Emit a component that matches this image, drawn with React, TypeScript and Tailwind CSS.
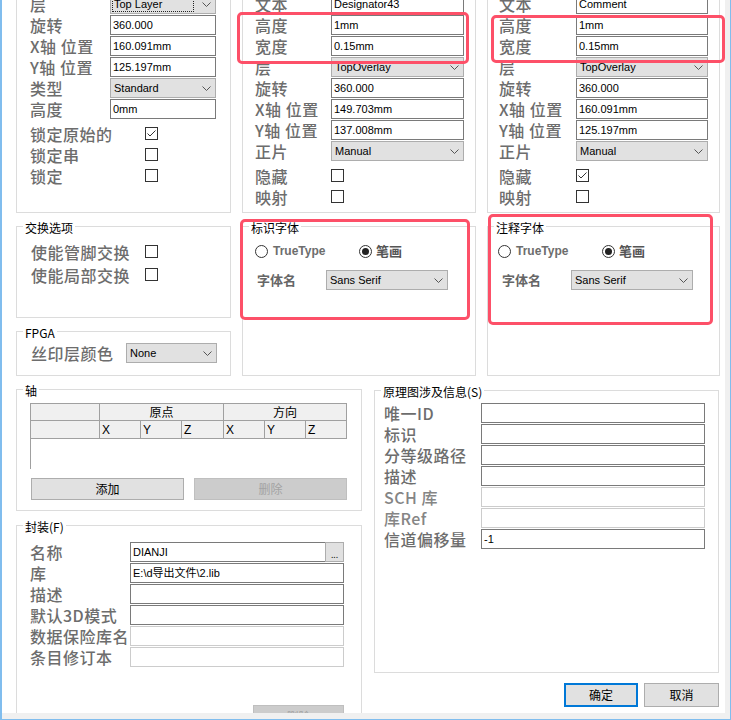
import React from 'react';

const CJK = "font-['Noto_Sans_CJK_SC',sans-serif]";
const LBL =
  "font-['Noto_Sans_CJK_SC',sans-serif] text-[16px] leading-[18px] font-medium text-[#6d6d6d] whitespace-nowrap tracking-[0.5px]";
const TXT = "font-['Liberation_Sans','Noto_Sans_CJK_SC',sans-serif] text-[11px] leading-[14px] text-black whitespace-nowrap";

function Chevron() {
  return (
    <svg width="9" height="5" viewBox="0 0 9 5" className="shrink-0">
      <polyline points="0.5,0.5 4.5,4.5 8.5,0.5" fill="none" stroke="#555" strokeWidth="1" />
    </svg>
  );
}

function TextBox({ value = '', disabled = false, className = '' }: { value?: string; disabled?: boolean; className?: string }) {
  return (
    <div
      className={`h-[20px] flex items-center bg-white border pl-[2px] ${
        disabled ? 'border-[#cccccc]' : 'border-[#7a7a7a]'
      } ${TXT} ${className}`}
    >
      {value}
    </div>
  );
}

function Select({ value, focus = false, className = '' }: { value: string; focus?: boolean; className?: string }) {
  return (
    <div className={`h-[20px] flex items-center justify-between bg-[#e1e1e1] border border-[#adadad] pr-[4px] ${TXT} ${className}`}>
      {focus ? (
        <div className="self-stretch my-[1px] ml-[1px] mr-[8px] flex-1 flex items-center border border-dotted border-[#222] pl-[1px]">
          {value}
        </div>
      ) : (
        <span className="pl-[3px]">{value}</span>
      )}
      <Chevron />
    </div>
  );
}

function Check({ checked = false }: { checked?: boolean }) {
  return (
    <div className="w-[13px] h-[13px] border border-[#333] bg-white shrink-0">
      {checked && (
        <svg width="11" height="11" viewBox="0 0 11 11">
          <polyline points="1.5,5.5 4,8 9.5,2.5" fill="none" stroke="#333" strokeWidth="1" />
        </svg>
      )}
    </div>
  );
}

function Radio({ on = false }: { on?: boolean }) {
  return (
    <div className="w-[13px] h-[13px] rounded-full border border-[#333] bg-white flex items-center justify-center shrink-0">
      {on && <div className="w-[7px] h-[7px] rounded-full bg-[#222]" />}
    </div>
  );
}

function Field({ label, lw, dim = false, children }: { label: string; lw: string; dim?: boolean; children: React.ReactNode }) {
  return (
    <div className="flex items-center h-[20px]">
      <div className={`${lw} shrink-0 ${LBL} ${dim ? 'text-[#858585]' : ''}`}>{label}</div>
      <div className="flex-1 min-w-0">{children}</div>
    </div>
  );
}

function CheckRow({ label, lw, checked = false, h = 'h-[21px]' }: { label: string; lw: string; checked?: boolean; h?: string }) {
  return (
    <div className={`flex items-center ${h}`}>
      <div className={`${lw} shrink-0 ${LBL}`}>{label}</div>
      <Check checked={checked} />
    </div>
  );
}

function Group({ title, className = '', children }: { title?: string; className?: string; children?: React.ReactNode }) {
  return (
    <div className={`relative border border-[#dcdcdc] ${className}`}>
      {title && (
        <span className={`absolute top-[-6px] left-[6px] bg-white px-[2px] text-[12px] leading-[14px] text-black ${CJK}`}>
          {title}
        </span>
      )}
      {children}
    </div>
  );
}

function Btn({
  children,
  className = '',
  disabled = false,
  primary = false,
}: {
  children: React.ReactNode;
  className?: string;
  disabled?: boolean;
  primary?: boolean;
}) {
  const look = disabled
    ? 'bg-[#cccccc] border border-[#bfbfbf] text-[#a3a3a3]'
    : primary
    ? 'bg-[#e1e1e1] border-2 border-[#0078d7] text-black'
    : 'bg-[#e1e1e1] border border-[#adadad] text-black';
  return (
    <div className={`flex items-center justify-center text-[12px] ${CJK} ${look} ${className}`}>{children}</div>
  );
}

function FontGroup({ title, pl, lm }: { title: string; pl: string; lm: string }) {
  return (
    <Group title={title} className={`h-[150px] pt-[13px] ${pl}`}>
      <div className="flex items-center h-[22px]">
        <div className="w-[104px] flex items-center gap-[5px]">
          <Radio />
          <span className="font-['Liberation_Sans',sans-serif] text-[12px] font-bold text-[#6d6d6d]">TrueType</span>
        </div>
        <div className="flex items-center gap-[4px]">
          <Radio on />
          <span className={`${CJK} text-[13px] font-bold text-[#555]`}>笔画</span>
        </div>
      </div>
      <div className={`flex items-center h-[20px] mt-[8px] ${lm}`}>
        <div className={`w-[69px] ${CJK} text-[13px] font-bold text-[#666]`}>字体名</div>
        <Select value="Sans Serif" className="w-[122px]" />
      </div>
    </Group>
  );
}

function Box({ className }: { className: string }) {
  return <div className={`absolute border-[3px] border-[#fd5068] rounded-[5px] pointer-events-none ${className}`} />;
}

export default function App() {
  return (
    <div className="w-[731px] h-[720px] bg-[#f0f0f0] border-l-2 border-r border-b border-[#80bdee] overflow-hidden">
      <div className="relative w-[723px] h-[713px] bg-white overflow-hidden">
        <div className="pl-[14px] mt-[-20px] flex flex-col gap-[13px]">
          {/* upper three columns */}
          <div className="flex gap-[11px]">
            {/* left */}
            <div className="w-[215px] flex flex-col gap-[13px]">
              <Group className="h-[233px] pt-[13px] pl-[13px] pr-[14px]">
                <div className="flex flex-col gap-[1px]">
                  <Field lw="w-[80px]" label="层">
                    <Select value="Top Layer" focus />
                  </Field>
                  <Field lw="w-[80px]" label="旋转">
                    <TextBox value="360.000" />
                  </Field>
                  <Field lw="w-[80px]" label="X轴 位置">
                    <TextBox value="160.091mm" />
                  </Field>
                  <Field lw="w-[80px]" label="Y轴 位置">
                    <TextBox value="125.197mm" />
                  </Field>
                  <Field lw="w-[80px]" label="类型">
                    <Select value="Standard" />
                  </Field>
                  <Field lw="w-[80px]" label="高度">
                    <TextBox value="0mm" />
                  </Field>
                </div>
                <div className="mt-[4px]">
                  <CheckRow lw="w-[115px]" label="锁定原始的" checked />
                  <CheckRow lw="w-[115px]" label="锁定串" />
                  <CheckRow lw="w-[115px]" label="锁定" />
                </div>
              </Group>
              <Group title="交换选项" className="h-[92px] pt-[13px] pl-[14px]">
                <CheckRow lw="w-[114px]" h="h-[23px]" label="使能管脚交换" />
                <CheckRow lw="w-[114px]" h="h-[23px]" label="使能局部交换" />
              </Group>
              <Group title="FPGA" className="h-[45px] pt-[11px] pl-[14px]">
                <div className="flex items-center h-[20px]">
                  <div className={`w-[95px] ${LBL}`}>丝印层颜色</div>
                  <Select value="None" className="w-[91px]" />
                </div>
              </Group>
            </div>

            {/* middle */}
            <div className="w-[234px] flex flex-col gap-[13px]">
              <Group className="h-[233px] pt-[13px] pl-[12px] pr-[11px]">
                <div className="flex flex-col gap-[1px]">
                  <Field lw="w-[76px]" label="文本">
                    <TextBox value="Designator43" />
                  </Field>
                  <Field lw="w-[76px]" label="高度">
                    <TextBox value="1mm" />
                  </Field>
                  <Field lw="w-[76px]" label="宽度">
                    <TextBox value="0.15mm" />
                  </Field>
                  <Field lw="w-[76px]" label="层">
                    <Select value="TopOverlay" />
                  </Field>
                  <Field lw="w-[76px]" label="旋转">
                    <TextBox value="360.000" />
                  </Field>
                  <Field lw="w-[76px]" label="X轴 位置">
                    <TextBox value="149.703mm" />
                  </Field>
                  <Field lw="w-[76px]" label="Y轴 位置">
                    <TextBox value="137.008mm" />
                  </Field>
                  <Field lw="w-[76px]" label="正片">
                    <Select value="Manual" />
                  </Field>
                </div>
                <div className="mt-[4px]">
                  <CheckRow lw="w-[76px]" label="隐藏" />
                  <CheckRow lw="w-[76px]" label="映射" />
                </div>
              </Group>
              <FontGroup title="标识字体" pl="pl-[12px]" lm="ml-[2px]" />
            </div>

            {/* right */}
            <div className="w-[233px] flex flex-col gap-[13px]">
              <Group className="h-[233px] pt-[13px] pl-[11px] pr-[11px]">
                <div className="flex flex-col gap-[1px]">
                  <Field lw="w-[77px]" label="文本">
                    <TextBox value="Comment" />
                  </Field>
                  <Field lw="w-[77px]" label="高度">
                    <TextBox value="1mm" />
                  </Field>
                  <Field lw="w-[77px]" label="宽度">
                    <TextBox value="0.15mm" />
                  </Field>
                  <Field lw="w-[77px]" label="层">
                    <Select value="TopOverlay" />
                  </Field>
                  <Field lw="w-[77px]" label="旋转">
                    <TextBox value="360.000" />
                  </Field>
                  <Field lw="w-[77px]" label="X轴 位置">
                    <TextBox value="160.091mm" />
                  </Field>
                  <Field lw="w-[77px]" label="Y轴 位置">
                    <TextBox value="125.197mm" />
                  </Field>
                  <Field lw="w-[77px]" label="正片">
                    <Select value="Manual" />
                  </Field>
                </div>
                <div className="mt-[4px]">
                  <CheckRow lw="w-[77px]" label="隐藏" checked />
                  <CheckRow lw="w-[77px]" label="映射" />
                </div>
              </Group>
              <FontGroup title="注释字体" pl="pl-[10px]" lm="ml-[4px]" />
            </div>
          </div>

          {/* lower two columns */}
          <div className="flex gap-[12px]">
            <div className="w-[346px] flex flex-col gap-[14px]">
              <Group title="轴" className="h-[122px] pt-[13px] pl-[13px] pr-[14px]">
                <div className="w-[317px]">
                  <div className="flex h-[18px] bg-[#f0f0f0] border-t border-l border-[#a0a0a0] text-[12px] text-black">
                    <div className="w-[69px] border-r border-b border-[#a0a0a0]" />
                    <div className={`w-[124px] border-r border-b border-[#a0a0a0] flex items-center justify-center ${CJK}`}>原点</div>
                    <div className={`w-[123px] border-r border-b border-[#a0a0a0] flex items-center justify-center ${CJK}`}>方向</div>
                  </div>
                  <div className="flex h-[18px] bg-[#f0f0f0] border-l border-[#a0a0a0] text-[12px] text-black font-['Liberation_Sans',sans-serif]">
                    <div className="w-[69px] border-r border-b border-[#a0a0a0]" />
                    <div className="w-[41px] border-r border-b border-[#a0a0a0] pl-[2px] flex items-center">X</div>
                    <div className="w-[41px] border-r border-b border-[#a0a0a0] pl-[2px] flex items-center">Y</div>
                    <div className="w-[42px] border-r border-b border-[#a0a0a0] pl-[2px] flex items-center">Z</div>
                    <div className="w-[41px] border-r border-b border-[#a0a0a0] pl-[2px] flex items-center">X</div>
                    <div className="w-[41px] border-r border-b border-[#a0a0a0] pl-[2px] flex items-center">Y</div>
                    <div className="w-[41px] border-r border-b border-[#a0a0a0] pl-[2px] flex items-center">Z</div>
                  </div>
                  <div className="h-[30px] border-l border-[#a0a0a0]" />
                </div>
                <div className="flex gap-[10px] mt-[9px] ml-[1px]">
                  <Btn className="w-[153px] h-[22px]">添加</Btn>
                  <Btn className="w-[153px] h-[22px]" disabled>
                    删除
                  </Btn>
                </div>
              </Group>
              <Group title="封装(F)" className="h-[220px] pt-[16px] pl-[13px] pr-[17px] flex flex-col">
                <div className="flex flex-col gap-[1px]">
                  <Field lw="w-[100px]" label="名称">
                    <div className="flex">
                      <TextBox value="DIANJI" className="flex-1" />
                      <div className="w-[19px] h-[20px] -ml-[1px] bg-[#e1e1e1] border border-[#adadad] flex items-end justify-center text-[9px] leading-[12px] text-black">
                        ...
                      </div>
                    </div>
                  </Field>
                  <Field lw="w-[100px]" label="库">
                    <TextBox value="E:\d导出文件\2.lib" />
                  </Field>
                  <Field lw="w-[100px]" label="描述">
                    <TextBox />
                  </Field>
                  <Field lw="w-[100px]" label="默认3D模式">
                    <TextBox />
                  </Field>
                  <Field lw="w-[100px]" label="数据保险库名">
                    <TextBox disabled />
                  </Field>
                  <Field lw="w-[100px]" label="条目修订本">
                    <TextBox disabled />
                  </Field>
                </div>
                <Btn className="w-[91px] h-[23px] self-end mt-[38px]" disabled>
                  删除
                </Btn>
              </Group>
            </div>

            <div className="w-[345px] flex flex-col mt-[1px]">
              <Group title="原理图涉及信息(S)" className="h-[283px] pt-[12px] pl-[9px] pr-[13px]">
                <div className="flex flex-col gap-[1px]">
                  <Field lw="w-[97px]" label="唯一ID">
                    <TextBox />
                  </Field>
                  <Field lw="w-[97px]" label="标识">
                    <TextBox />
                  </Field>
                  <Field lw="w-[97px]" label="分等级路径">
                    <TextBox />
                  </Field>
                  <Field lw="w-[97px]" label="描述">
                    <TextBox />
                  </Field>
                  <Field lw="w-[97px]" label="SCH 库" dim>
                    <TextBox disabled />
                  </Field>
                  <Field lw="w-[97px]" label="库Ref" dim>
                    <TextBox disabled />
                  </Field>
                  <Field lw="w-[97px]" label="信道偏移量">
                    <TextBox value="-1" />
                  </Field>
                </div>
              </Group>
              <div className="flex justify-end gap-[6px] mt-[10px]">
                <Btn className="w-[74px] h-[24px]" primary>
                  确定
                </Btn>
                <Btn className="w-[75px] h-[24px]">取消</Btn>
              </div>
            </div>
          </div>
        </div>

        {/* red annotation frames drawn over the dialog */}
        <Box className="left-[235px] top-[12px] w-[232px] h-[52px]" />
        <Box className="left-[489px] top-[15px] w-[234px] h-[48px]" />
        <Box className="left-[238px] top-[219px] w-[230px] h-[101px]" />
        <Box className="left-[486px] top-[214px] w-[225px] h-[111px]" />
      </div>
    </div>
  );
}
